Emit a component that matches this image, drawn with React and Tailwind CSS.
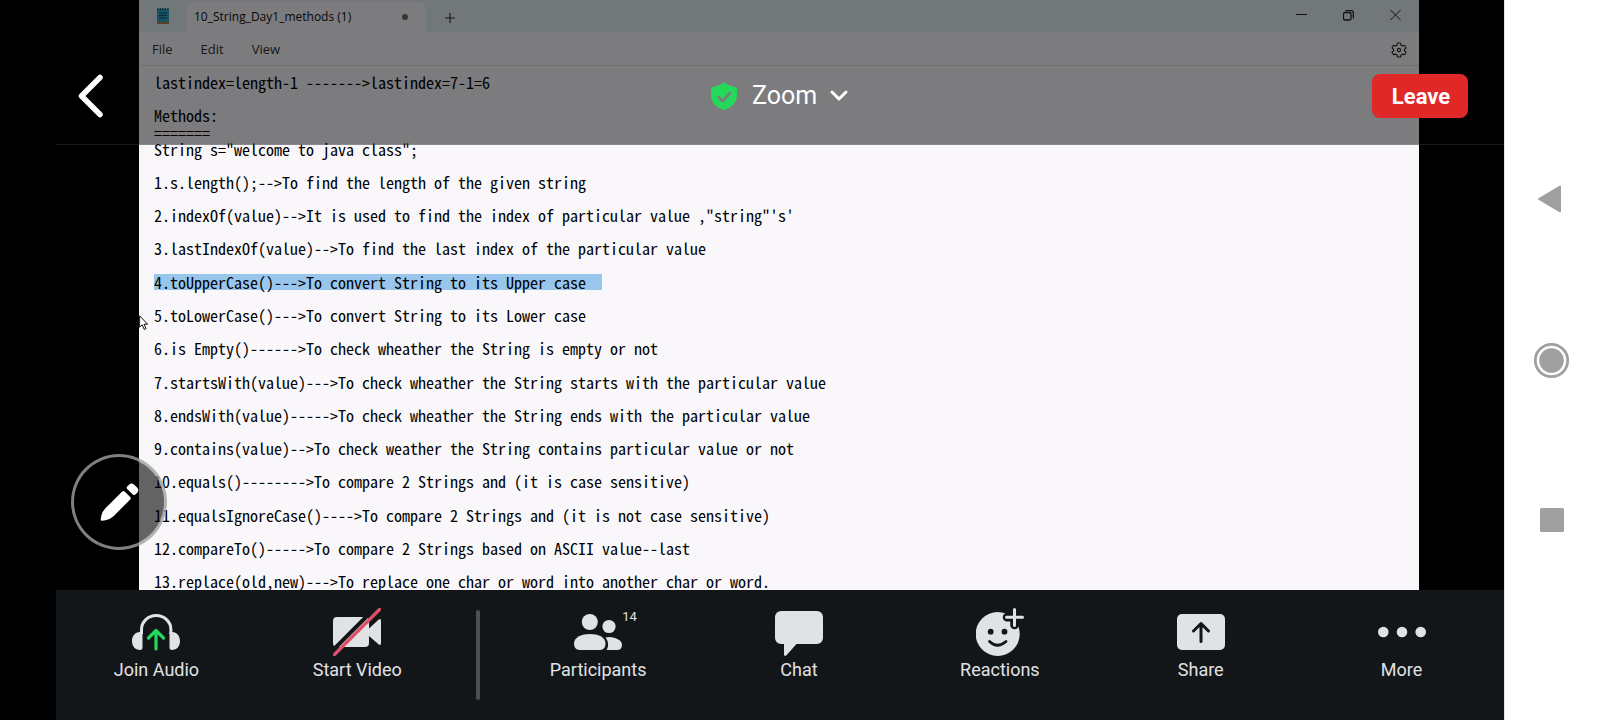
const LINES = [
  'lastindex=length-1 ------->lastindex=7-1=6',
  '',
  'Methods:',
  '=======',
  'String s="welcome to java class";',
  '',
  '1.s.length();-->To find the length of the given string',
  '',
  '2.indexOf(value)-->It is used to find the index of particular value ,"string"\'s\'',
  '',
  '3.lastIndexOf(value)-->To find the last index of the particular value',
  '',
  '4.toUpperCase()--->To convert String to its Upper case  ',
  '',
  '5.toLowerCase()--->To convert String to its Lower case',
  '',
  '6.is Empty()------>To check wheather the String is empty or not',
  '',
  '7.startsWith(value)--->To check wheather the String starts with the particular value',
  '',
  '8.endsWith(value)----->To check wheather the String ends with the particular value',
  '',
  '9.contains(value)-->To check weather the String contains particular value or not',
  '',
  '10.equals()-------->To compare 2 Strings and (it is case sensitive)',
  '',
  '11.equalsIgnoreCase()---->To compare 2 Strings and (it is not case sensitive)',
  '',
  '12.compareTo()----->To compare 2 Strings based on ASCII value--last',
  '',
  '13.replace(old,new)--->To replace one char or word into another char or word.',
];
const SELECTED = 12;

function Notepad() {
  return (
    <section
      aria-label="Shared screen"
      className="relative ml-[83px] mr-[85px] flex flex-1 flex-col bg-[#f9f7fa] font-['Open_Sans','Noto_Sans',sans-serif] text-[#111]"
    >
      <div className="flex h-8 items-stretch bg-[#e4f0f5]">
        <div className="flex w-[47px] items-center justify-center">
          <svg width="14" height="18" viewBox="0 0 14 18" aria-hidden="true">
            <rect x="1" y="2" width="12" height="13" rx="1" fill="#2ea5cb" />
            <path d="M2 1v2M4.500 1v2M7 1v2M9.500 1v2M12 1v2" stroke="#15586f" strokeWidth="1.2" />
            <path d="M3 6h8M3 8.500h8M3 11h8" stroke="#0c5a78" strokeWidth="1.2" />
            <rect x="1" y="15" width="12" height="2" fill="#c07f50" />
          </svg>
        </div>
        <div className="mt-0.5 flex w-60 items-center justify-between rounded-t-lg bg-[#f9f7fa] px-2">
          <span className="text-xs">10_String_Day1_methods (1)</span>
          <span className="mr-2.5 size-1.5 rounded-full bg-[#707070]" />
        </div>
        <button type="button" aria-label="New tab" className="ml-[18px] flex items-center">
          <svg width="12" height="12" viewBox="0 0 12 12" className="mt-1" stroke="#333" strokeWidth="1.2" aria-hidden="true">
            <path d="M6 1v10M1 6h10" />
          </svg>
        </button>
        <div className="ml-auto flex items-center gap-9 pr-[18px]">
          <button type="button" aria-label="Minimize">
            <svg width="11" height="12" viewBox="0 0 11 12" stroke="#222" aria-hidden="true"><path d="M0 4.500h11" /></svg>
          </button>
          <button type="button" aria-label="Restore">
            <svg width="11" height="12" viewBox="0 0 11 12" fill="none" stroke="#222" aria-hidden="true">
              <rect x=".5" y="2.500" width="7.500" height="7.500" rx="1.500" strokeWidth="1.300" />
              <path d="M2.500 .7h5.500a2.300 2.300 0 0 1 2.300 2.300v5.500" strokeWidth="1.300" />
            </svg>
          </button>
          <button type="button" aria-label="Close">
            <svg width="11" height="12" viewBox="0 0 11 12" stroke="#222" aria-hidden="true"><path d="M.5 0l10 10M10.500 0l-10 10" /></svg>
          </button>
        </div>
      </div>
      <div className="flex h-[34px] items-center gap-7 border-b border-[#dedede] pl-[13px] pr-3 pt-0.5 text-[13px] text-[#333]">
        <button type="button">File</button>
        <button type="button">Edit</button>
        <button type="button">View</button>
        <button type="button" aria-label="Settings" className="ml-auto">
          <svg width="16" height="16" viewBox="0 0 16 16" fill="none" stroke="#222" strokeWidth="1.100" strokeLinejoin="round" aria-hidden="true">
            <path d="M6.500 1h3l.5 2.200 1.300.8 2.200-.7 1.500 2.600L13.400 7.400v1.300L15 10.200l-1.500 2.500-2.200-.6-1.300.8L9.500 15h-3L6 12.900l-1.300-.8-2.200.6L1 10.200l1.600-1.500V7.400L1 5.900l1.500-2.600 2.200.7L6 3.200z" />
            <circle cx="8" cy="8" r="1.600" />
          </svg>
        </button>
      </div>
      <div className="grid flex-1 auto-rows-fr overflow-hidden pl-[15px] pt-2 font-['Noto_Sans_Mono_CJK_SC','Liberation_Mono',monospace] text-base leading-4 text-black">
        {LINES.map((line, i) => (
          <p key={i} className="whitespace-pre">
            {i === SELECTED ? <mark className="inline-block h-full bg-[#99c6ec] text-black">{line}</mark> : line}
          </p>
        ))}
      </div>
      <svg className="absolute left-0 top-[315px]" width="10" height="16" viewBox="0 0 10 16" aria-hidden="true">
        <path d="M.6.8v11.400l2.600-2.400 2 4.600 1.800-.8-2-4.400h3.600z" fill="#fff" stroke="#111" strokeWidth="1" />
      </svg>
    </section>
  );
}

function TopBar() {
  return (
    <header className="absolute inset-x-0 top-0 grid h-[145px] grid-cols-[1fr_auto_1fr] items-center border-b border-white/10 bg-black/50 px-5 pt-12 font-[Roboto,sans-serif] text-white">
      <button type="button" aria-label="Back" className="justify-self-start">
        <svg width="30" height="46" viewBox="0 0 30 46" fill="none" stroke="#fff" strokeWidth="5.500" strokeLinecap="round" strokeLinejoin="round" aria-hidden="true">
          <path d="M24 4.500L5.500 23 24 41.500" />
        </svg>
      </button>
      <button type="button" className="flex items-center text-[25px] leading-8">
        <svg width="26" height="28" viewBox="0 0 26 28" aria-hidden="true">
          <path fillRule="evenodd" fill="#23d959" d="M13 0C10 3 5 5 0 5.500V13c0 7 5 12.500 13 15 8-2.500 13-8 13-15V5.500C21 5 16 3 13 0z" />
          <path d="M7.500 15l4 4L19 11" fill="none" stroke="#7c7c7c" strokeWidth="2.600" strokeLinecap="round" strokeLinejoin="round" />
        </svg>
        <span className="ml-[15px]">Zoom</span>
        <svg className="ml-3" width="20" height="14" viewBox="0 0 20 14" fill="none" stroke="#fff" strokeWidth="3" strokeLinecap="round" strokeLinejoin="round" aria-hidden="true">
          <path d="M3 3l7 7 7-7" />
        </svg>
      </button>
      <button type="button" className="mr-4 h-11 w-24 justify-self-end rounded-lg bg-[#e02828] pl-0.5 text-[22px] font-bold">
        Leave
      </button>
    </header>
  );
}

const ICON = { width: 48, height: 48, viewBox: '0 0 48 48', 'aria-hidden': true };
const INK = '#131619';

const AudioIcon = () => (
  <svg {...ICON} fill="none">
    <path d="M9.500 26V21.500a14.700 14 0 0 1 29.400 0V26" stroke="#e1e2e4" strokeWidth="3" />
    <path d="M10.500 24v15.500a2.500 2.500 0 0 1-2.500 2.500C3 42 0 38 0 33s3-9 8-9zM37.500 24v15.500a2.500 2.500 0 0 0 2.500 2.500c5 0 8-4 8-9s-3-9-8-9z" fill="#e1e2e4" />
    <path d="M24 41V22.500M16.500 30l7.500-7.500 7.500 7.500" stroke="#23d959" strokeWidth="3.200" strokeLinecap="round" strokeLinejoin="round" />
  </svg>
);
const VideoIcon = () => (
  <svg {...ICON}>
    <rect y="9" width="36" height="30" rx="4" fill="#e1e2e4" />
    <path d="M36 20.500l9.500-8.800Q48 10 48 13v22q0 3-2.500 1.300L36 28z" fill="#e1e2e4" />
    <path d="M-1 43L42 0" stroke={INK} strokeWidth="4" />
    <path d="M1.500 46.500l45-45" stroke="#dc5068" strokeWidth="3.200" strokeLinecap="round" />
  </svg>
);
const PeopleIcon = () => (
  <svg {...ICON} fill="#e1e2e4">
    <circle cx="15.800" cy="14" r="8" />
    <circle cx="35" cy="18.500" r="6.600" />
    <path d="M0 35.500C0 29 8 26 16 26s15.500 3 15.500 9.500Q31.500 42 26 42H5.500Q0 42 0 35.500z" />
    <path d="M31.500 29.500Q36 28.500 40 29.700C45 31 48 33.500 48 37q0 5-5 5H32.500c2.300-3.500 2.300-8-1-12.500z" />
  </svg>
);
const ChatIcon = () => (
  <svg {...ICON} fill="#e1e2e4">
    <path d="M6 3h36a6 6 0 0 1 6 6v21a6 6 0 0 1-6 6H21.500L11.500 47.300Q9 49 9 46V36H6a6 6 0 0 1-6-6V9a6 6 0 0 1 6-6z" />
  </svg>
);
const ReactionsIcon = () => (
  <svg {...ICON} fill="none" strokeLinecap="round">
    <circle cx="21.700" cy="26" r="22" fill="#e1e2e4" />
    <path d="M38.500 2v15M31 9.300h15" stroke={INK} strokeWidth="8.500" />
    <path d="M38.500 1.500v16M30.500 9.300h16" stroke="#e1e2e4" strokeWidth="3" />
    <circle cx="14.700" cy="23.700" r="2.900" fill={INK} />
    <circle cx="28.500" cy="23.700" r="2.900" fill={INK} />
    <path d="M13.500 33.500q8 7.500 16.500 0" stroke={INK} strokeWidth="2.800" />
  </svg>
);
const ShareIcon = () => (
  <svg {...ICON} fill="none">
    <rect y="6" width="48" height="36" rx="5" fill="#e1e2e4" />
    <path d="M24 33.500V15.500M16.500 23l7.500-7.500 7.500 7.500" stroke={INK} strokeWidth="3" strokeLinecap="round" strokeLinejoin="round" />
  </svg>
);
const MoreIcon = () => (
  <svg {...ICON} fill="#e1e2e4">
    <circle cx="5.300" cy="24" r="5.300" />
    <circle cx="24" cy="24" r="5.300" />
    <circle cx="42.700" cy="24" r="5.300" />
  </svg>
);

function Tool({ icon, label, badge }) {
  return (
    <button type="button" className="flex flex-1 basis-0 flex-col items-center gap-1 pt-[18px]">
      <span className="relative">
        {icon}
        {badge && <span className="absolute left-full top-0 text-[13px] leading-[18px]">{badge}</span>}
      </span>
      <span className="text-lg leading-5">{label}</span>
    </button>
  );
}

function Toolbar() {
  return (
    <footer className="flex h-[130px] items-start bg-[#131619] pr-0.5 font-[Roboto,sans-serif] text-[#e1e2e4]">
      <Tool icon={<AudioIcon />} label="Join Audio" />
      <Tool icon={<VideoIcon />} label="Start Video" />
      <div className="flex w-10 justify-center pt-5">
        <div className="h-[90px] w-1 rounded-full bg-[#4b5057]" />
      </div>
      <Tool icon={<PeopleIcon />} label="Participants" badge="14" />
      <Tool icon={<ChatIcon />} label="Chat" />
      <Tool icon={<ReactionsIcon />} label="Reactions" />
      <Tool icon={<ShareIcon />} label="Share" />
      <Tool icon={<MoreIcon />} label="More" />
    </footer>
  );
}

function SystemNav() {
  return (
    <nav aria-label="System" className="flex w-24 flex-col items-center justify-center gap-28 border-l border-[#e4e4e4] bg-white pr-px text-[#a0a0a0]">
      <button type="button" aria-label="Back">
        <svg {...ICON} fill="currentColor" stroke="currentColor" strokeWidth="2" strokeLinejoin="round"><path d="M11 23L32 10.500v25z" /></svg>
      </button>
      <button type="button" aria-label="Home">
        <svg {...ICON} fill="currentColor">
          <circle cx="23.500" cy="24.500" r="16.200" fill="none" stroke="currentColor" strokeWidth="2.800" />
          <circle cx="23.500" cy="24.500" r="12.300" />
        </svg>
      </button>
      <button type="button" aria-label="Recents">
        <svg {...ICON} fill="currentColor"><rect x="12" y="12" width="24" height="24" rx="1.500" /></svg>
      </button>
    </nav>
  );
}

export default function App() {
  return (
    <div className="flex min-h-screen bg-black">
      <main className="relative ml-14 flex flex-1 flex-col">
        <Notepad />
        <Toolbar />
        <TopBar />
        <button
          type="button"
          aria-label="Annotate"
          className="absolute bottom-[170px] left-[15px] flex size-24 items-center justify-center rounded-full border-3 border-white/50 bg-black/60"
        >
          <svg width="40" height="40" viewBox="0 0 40 40" fill="#fff" aria-hidden="true">
            <path d="M23.200 9.500q1.300-1.200 2.500 0l5.500 5.500q1.200 1.200 0 2.500L14.500 34.200Q11 37.500 6.500 38.200L3 38.700q-1.500 0-1.300-1.500L2.500 33q.8-3.500 3.700-6.500zM28.200 4.500l1.800-1.800q2.300-2.200 5-.3l3.300 3.300q2 2.600 0 5L36.300 12.500q-1.200 1.200-2.500 0l-5.600-5.500q-1.200-1.200 0-2.500z" />
          </svg>
        </button>
      </main>
      <SystemNav />
    </div>
  );
}
